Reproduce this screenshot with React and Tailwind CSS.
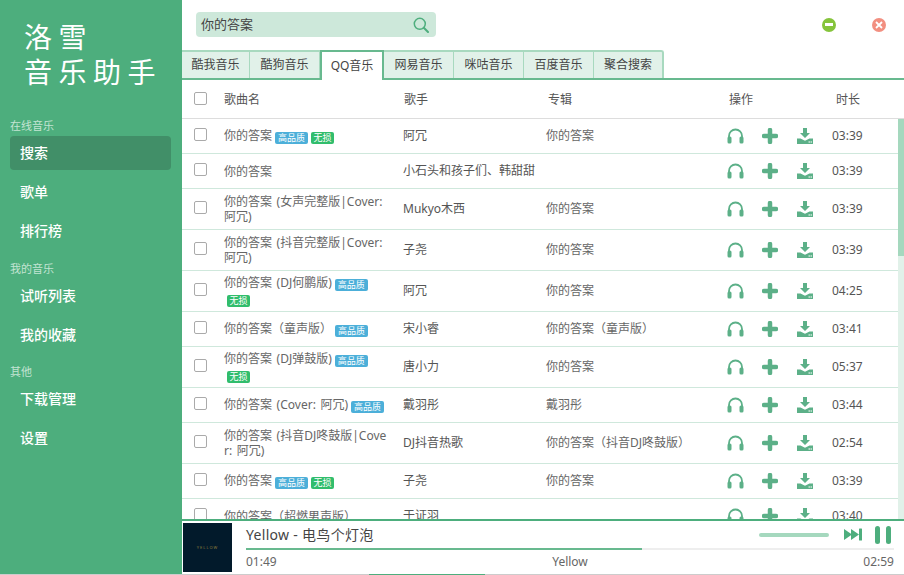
const tabs = ['酷我音乐', '酷狗音乐', 'QQ音乐', '网易音乐', '咪咕音乐', '百度音乐', '聚合搜索']

const songs = [
  { name: '你的答案', hq: true, sq: true, singer: '阿冗', album: '你的答案', time: '03:39' },
  { name: '你的答案', singer: '小石头和孩子们、韩甜甜', album: '', time: '03:39' },
  { name: '你的答案 (女声完整版|Cover: 阿冗)', singer: 'Mukyo木西', album: '你的答案', time: '03:39', tall: true },
  { name: '你的答案 (抖音完整版|Cover: 阿冗)', singer: '子尧', album: '你的答案', time: '03:39', tall: true },
  { name: '你的答案 (DJ何鹏版)', hq: true, sq: true, singer: '阿冗', album: '你的答案', time: '04:25', tall: true },
  { name: '你的答案（童声版）', hq: true, singer: '宋小睿', album: '你的答案（童声版）', time: '03:41' },
  { name: '你的答案 (DJ弹鼓版)', hq: true, sq: true, singer: '唐小力', album: '你的答案', time: '05:37', tall: true },
  { name: '你的答案 (Cover: 阿冗)', hq: true, singer: '戴羽彤', album: '戴羽彤', time: '03:44' },
  { name: '你的答案 (抖音DJ咚鼓版|Cover: 阿冗)', singer: 'DJ抖音热歌', album: '你的答案（抖音DJ咚鼓版）', time: '02:54', tall: true },
  { name: '你的答案', hq: true, sq: true, singer: '子尧', album: '你的答案', time: '03:39' },
  { name: '你的答案（超燃男声版）', singer: '于证羽', album: '', time: '03:40' },
]

function Headphones() {
  return (
    <svg width="17" height="16" viewBox="0 0 17 16" className="text-[#5cb088]">
      <path d="M2 10V8a6.500 6.500 0 0 1 13 0v2" fill="none" stroke="currentColor" strokeWidth="1.800" />
      <rect x="0.500" y="8.500" width="4" height="7" rx="1.500" fill="currentColor" />
      <rect x="12.500" y="8.500" width="4" height="7" rx="1.500" fill="currentColor" />
    </svg>
  )
}

function Plus() {
  return (
    <svg width="16" height="16" viewBox="0 0 16 16" className="text-[#5cb088]">
      <path d="M8 2v12M2 8h12" stroke="currentColor" strokeWidth="4.500" strokeLinecap="round" />
    </svg>
  )
}

function Download() {
  return (
    <svg width="16" height="16" viewBox="0 0 16 16" className="ml-[1px] text-[#5cb088]">
      <path d="M6 0h4v5h3L8 10 3 5h3z" fill="currentColor" />
      <path d="M0 10.500h3.500L8 12.800l4.500-2.300H16V16H0z" fill="currentColor" />
      <rect x="11.500" y="13.500" width="2" height="1" fill="#fff" />
      <rect x="14" y="13.500" width="1" height="1" fill="#fff" />
    </svg>
  )
}

function SongRow({ song }) {
  return (
    <div className={`grid shrink-0 grid-cols-[42px_179px_143px_181px_105px_1fr] items-center border-b border-[#cfe8dc] text-xs ${song.tall ? 'h-[41px]' : 'h-[35px]'}`}>
      <div className="pl-3">
        <div className="-mt-[3px] h-[13px] w-[13px] rounded-[2px] border border-[#aaaaaa] bg-white" />
      </div>
      <div className="break-all pr-[14px] leading-[15px] text-[#666666] [word-spacing:1.5px]">
        {song.name}
        {song.hq && <span className="ml-[3px] inline-block h-3 w-[33px] rounded-[2px] bg-[#4cafd9] text-center align-[-1px] text-[9px] leading-3 text-white">高品质</span>}
        {song.sq && <span className="ml-[3px] inline-block h-3 w-[23px] rounded-[2px] bg-[#31bd6c] text-center align-[-1px] text-[9px] leading-3 text-white">无损</span>}
      </div>
      <div className="overflow-hidden whitespace-nowrap text-[#555555]">{song.singer}</div>
      <div className="text-[#666666]">{song.album}</div>
      <div className="flex items-center gap-[18px]">
        <Headphones />
        <Plus />
        <Download />
      </div>
      <div className="text-[#555555]">{song.time}</div>
    </div>
  )
}

function NavItem({ label, active }) {
  return (
    <div className={`mx-[10px] mb-[5px] flex h-[34px] items-center rounded-[4px] pl-[10px] text-sm font-medium text-white ${active ? 'bg-[#418f68]' : ''}`}>
      {label}
    </div>
  )
}

function NavLabel({ children }) {
  return <div className="flex h-5 items-center pl-[10px] text-[11px] text-[#c3e4d3]">{children}</div>
}

export default function App() {
  return (
    <div className="flex h-[575px] w-[904px] flex-col overflow-hidden bg-white font-['Noto_Sans','Noto_Sans_CJK_SC',sans-serif]">
      <div className="flex min-h-0 flex-1">
        <aside className="w-[181px] shrink-0 bg-[#4dae7d]">
          <div className="h-[116px] pl-[24px] pt-[20px] text-[28px] leading-[35px] tracking-[6.5px] text-white">
            <div>洛雪</div>
            <div>音乐助手</div>
          </div>
          <NavLabel>在线音乐</NavLabel>
          <NavItem label="搜索" active />
          <NavItem label="歌单" />
          <NavItem label="排行榜" />
          <div className="h-[6px]" />
          <NavLabel>我的音乐</NavLabel>
          <NavItem label="试听列表" />
          <NavItem label="我的收藏" />
          <div className="h-[5px]" />
          <NavLabel>其他</NavLabel>
          <NavItem label="下载管理" />
          <NavItem label="设置" />
        </aside>

        <main className="flex min-w-0 flex-1 flex-col border-l border-[#4dae7d]">
          <header className="flex h-[50px] shrink-0 items-center pb-[1px] pl-[14px]">
            <div className="flex h-[25px] w-[240px] items-center justify-between rounded-[4px] bg-[#cde8da] pl-[5px] pr-[7px] text-[13px] text-[#444444]">
              <span>你的答案</span>
              <svg width="16" height="16" viewBox="0 0 16 16" className="text-[#4fae7e]">
                <circle cx="6.800" cy="6.800" r="5.500" fill="none" stroke="currentColor" strokeWidth="1.500" />
                <path d="M10.800 10.800L15 15" stroke="currentColor" strokeWidth="2" strokeLinecap="round" />
              </svg>
            </div>
            <div className="ml-auto flex items-center gap-[36px] pr-[18px]">
              <div className="flex h-[14px] w-[14px] items-center justify-center rounded-full bg-[#85c43b]">
                <div className="h-[3px] w-2 bg-white" />
              </div>
              <div className="flex h-[14px] w-[14px] items-center justify-center rounded-full bg-[#f28f80]">
                <svg width="8" height="8" viewBox="0 0 8 8">
                  <path d="M1 1l6 6M7 1L1 7" stroke="#fff" strokeWidth="1.800" />
                </svg>
              </div>
            </div>
          </header>

          <nav className="flex h-[30px] shrink-0 border-b-2 border-[#68b98f] text-xs text-[#444444]">
            {tabs.map((t, i) =>
              t === 'QQ音乐' ? (
                <div key={t} className="-mb-[2px] flex h-[30px] w-[64px] items-center justify-center border-x-2 border-t-2 border-[#68b98f] bg-white">{t}</div>
              ) : (
                <div key={t} className={`flex h-[28px] items-center justify-center border-t-2 border-[#a8d9bf] bg-[#e1f1e9] ${i === 0 ? 'w-[68px]' : 'w-[70px]'} ${i === 6 ? 'rounded-tr-[3px] border-r-2' : 'border-r'}`}>{t}</div>
              ),
            )}
          </nav>

          <div className="grid h-[39px] shrink-0 grid-cols-[42px_180px_144px_180px_108px_1fr] items-center border-b border-[#dddddd] pt-[2px] text-xs text-[#555555]">
            <div className="pl-3">
              <div className="-mt-[3px] h-[13px] w-[13px] rounded-[2px] border border-[#aaaaaa] bg-white" />
            </div>
            <div>歌曲名</div>
            <div>歌手</div>
            <div>专辑</div>
            <div className="pl-[1px]">操作</div>
            <div>时长</div>
          </div>

          <div className="relative flex min-h-0 flex-1 flex-col overflow-hidden">
            {songs.map((s, i) => <SongRow key={i} song={s} />)}
            <div className="absolute inset-y-0 right-0 w-[6px] bg-[#e1f1e9]">
              <div className="h-[137px] w-full bg-[#a5d8be]" />
            </div>
          </div>

          <footer className="flex h-[55px] shrink-0 border-t-2 border-[#4dae7d] bg-white">
            <div className="ml-[1px] mt-[2px] flex h-[49px] w-[49px] shrink-0 items-center justify-center bg-[#021a2b] text-[4px] tracking-[1px] text-[#8a7a3c]">YELLOW</div>
            <div className="ml-[14px] mr-[10px] flex min-w-0 flex-1 flex-col">
              <div className="flex h-[27px] items-center justify-between">
                <span className="pt-[1px] text-sm tracking-[0.3px] text-[#444444]">Yellow - 电鸟个灯泡</span>
                <div className="mr-[3px] flex items-center">
                  <div className="h-1 w-[70px] rounded-full bg-[#a5d8be]" />
                  <svg width="18" height="13" viewBox="0 0 18 13" className="ml-[15px] text-[#4dae7d]">
                    <path d="M0 1l8 5.500L0 12zM7 1l8 5.500L7 12z" fill="currentColor" />
                    <rect x="15" y="0.500" width="3" height="12" rx="0.500" fill="currentColor" />
                  </svg>
                  <div className="ml-[13px] flex gap-[6px]">
                    <div className="h-[18px] w-[5px] rounded-full bg-[#4dae7d]" />
                    <div className="h-[18px] w-[5px] rounded-full bg-[#4dae7d]" />
                  </div>
                </div>
              </div>
              <div className="h-[2px] bg-[#eeeeee]">
                <div className="h-full w-[396px] bg-[#68b98f]" />
              </div>
              <div className="grid grid-cols-3 pt-1 text-xs text-[#666666]">
                <span>01:49</span>
                <span className="text-center">Yellow</span>
                <span className="text-right">02:59</span>
              </div>
            </div>
          </footer>
        </main>
      </div>
      <div className="flex h-px shrink-0 bg-[#cccccc]">
        <div className="ml-[369px] w-[116px] bg-[#4dae7d]" />
      </div>
    </div>
  )
}
